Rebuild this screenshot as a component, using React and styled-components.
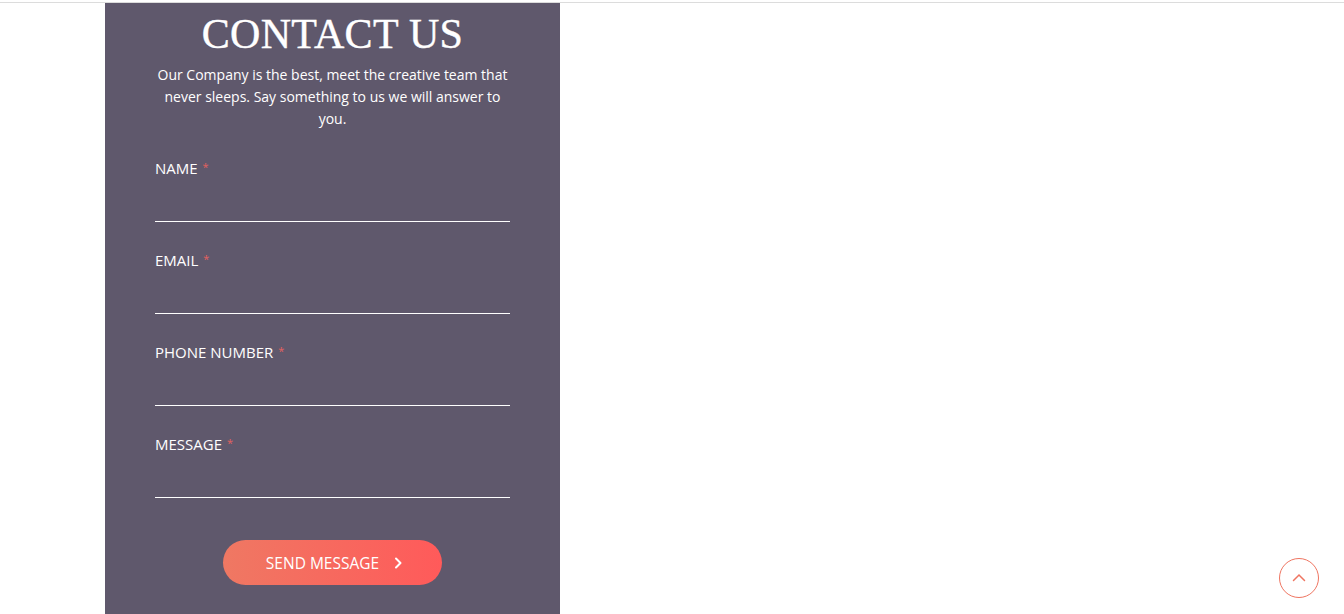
import React from 'react';
import styled, { createGlobalStyle } from 'styled-components';

const GlobalStyle = createGlobalStyle`
    html, body {
        margin: 0;
        padding: 0;
        background: #ffffff;
        font-family: "Open Sans", "Noto Sans", sans-serif;
    }
`;

const Page = styled.div`
    height: 614px;
    overflow: hidden;
    padding-top: 2px;
    box-sizing: border-box;
    position: relative;
`;

const TopRule = styled.div`
    height: 1px;
    background: #dcdcdc;
`;

const Container = styled.div`
    padding-left: 105px;
`;

const Panel = styled.section`
    width: 455px;
    min-height: 620px;
    background: #5f586c;
    box-sizing: border-box;
    padding: 9px 50px 40px;
    color: #ffffff;
`;

const Title = styled.h2`
    margin: 0;
    text-align: center;
    font-family: "Liberation Serif", "DejaVu Serif", serif;
    font-weight: 400;
    font-size: 42px;
    line-height: 44px;
    letter-spacing: 0.3px;
    -webkit-text-stroke: 0.4px #ffffff;
`;

const Intro = styled.p`
    margin: 8px 0 0;
    text-align: center;
    font-size: 14px;
    line-height: 22px;
`;

const Form = styled.form`
    margin-top: 28px;
    display: flex;
    flex-direction: column;
    gap: 28px;
`;

const Field = styled.label`
    display: block;
`;

const Label = styled.span`
    display: block;
    font-size: 15px;
    line-height: 20px;
    text-transform: uppercase;
`;

const Star = styled.span`
    color: #e5615f;
    font-size: 11px;
    line-height: 0;
    margin-left: 5px;
    position: relative;
    top: -3px;
`;

const Input = styled.input`
    display: block;
    width: 100%;
    height: 44px;
    box-sizing: border-box;
    border: 0;
    border-bottom: 1px solid #ffffff;
    background: transparent;
    color: #ffffff;
    outline: none;
    font: inherit;
`;

const Actions = styled.div`
    display: flex;
    justify-content: center;
    margin-top: 14px;
`;

const SendButton = styled.button`
    display: flex;
    align-items: center;
    justify-content: center;
    gap: 14px;
    width: 219px;
    height: 45px;
    border: 0;
    border-radius: 23px;
    background: linear-gradient(90deg, #ef7863 0%, #ff5a5a 100%);
    color: #ffffff;
    font-family: "Open Sans", "Noto Sans", sans-serif;
    font-size: 15.5px;
    text-transform: uppercase;
    padding: 0 0 0 4px;
    cursor: pointer;
`;

const ScrollTop = styled.button`
    position: absolute;
    right: 25px;
    bottom: 16px;
    width: 40px;
    height: 40px;
    border-radius: 50%;
    border: 1.5px solid #ef7561;
    background: #ffffff;
    display: flex;
    align-items: center;
    justify-content: center;
    padding: 0;
    cursor: pointer;
`;

const fields = ['Name', 'Email', 'Phone Number', 'Message'];

export default function App() {
    return (
        <>
            <GlobalStyle />
            <Page>
                <TopRule />
                <Container>
                    <Panel>
                        <Title>CONTACT US</Title>
                        <Intro>
                            Our Company is the best, meet the creative team that never sleeps. Say something to us we will answer to you.
                        </Intro>
                        <Form onSubmit={e => e.preventDefault()}>
                            {fields.map(name => (
                                <Field key={name}>
                                    <Label>{name}<Star>*</Star></Label>
                                    <Input type="text" />
                                </Field>
                            ))}
                            <Actions>
                                <SendButton type="submit">
                                    Send Message
                                    <svg width="10" height="12" viewBox="0 0 10 12" fill="none">
                                        <path d="M3 1.5 L7.5 6 L3 10.5" stroke="#fff" strokeWidth="2" strokeLinecap="round" strokeLinejoin="round" />
                                    </svg>
                                </SendButton>
                            </Actions>
                        </Form>
                    </Panel>
                </Container>
                <ScrollTop aria-label="Back to top">
                    <svg width="14" height="10" viewBox="0 0 14 10" fill="none">
                        <path d="M1.5 7.5 L7 2 L12.5 7.5" stroke="#ef7561" strokeWidth="1.5" strokeLinecap="round" />
                    </svg>
                </ScrollTop>
            </Page>
        </>
    );
}
